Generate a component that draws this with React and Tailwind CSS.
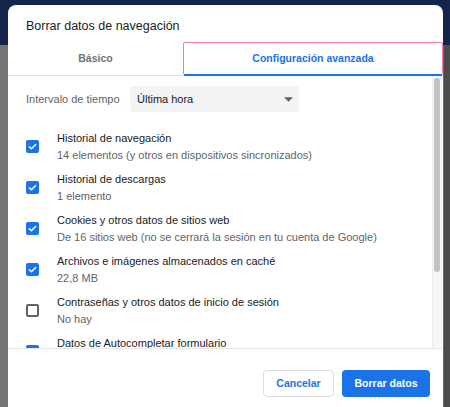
import React from "react";

const items = [
  { title: "Historial de navegación", sub: "14 elementos (y otros en dispositivos sincronizados)", checked: true },
  { title: "Historial de descargas", sub: "1 elemento", checked: true },
  { title: "Cookies y otros datos de sitios web", sub: "De 16 sitios web (no se cerrará la sesión en tu cuenta de Google)", checked: true },
  { title: "Archivos e imágenes almacenados en caché", sub: "22,8 MB", checked: true },
  { title: "Contraseñas y otros datos de inicio de sesión", sub: "No hay", checked: false },
  { title: "Datos de Autocompletar formulario", sub: "", checked: true },
];

function Checkbox({ checked }) {
  if (!checked) {
    return <div className="w-[13px] h-[13px] shrink-0 rounded-[2px] border-2 border-[#5f6368] bg-white" />;
  }
  return (
    <div className="w-[13px] h-[13px] shrink-0 rounded-[2px] bg-[#1a73e8] flex items-center justify-center">
      <svg width="11" height="11" viewBox="0 0 24 24">
        <path d="M5 12.5l4.5 4.5L19 7.5" fill="none" stroke="#fff" strokeWidth="3.2" strokeLinecap="round" strokeLinejoin="round" />
      </svg>
    </div>
  );
}

export default function App() {
  return (
    <div
      className="relative w-[450px] h-[407px] overflow-hidden"
      style={{ fontFamily: '"Liberation Sans", Arial, sans-serif' }}
    >
      {/* dimmed page behind the modal */}
      <div className="flex flex-col h-full">
        <div className="h-[45px] bg-[#13254a]" />
        <div className="flex-1 flex">
          <div className="flex-1 bg-[#767676] text-[#2a2a2a] text-[12px] pt-[180px] pl-[0px] leading-[40px]">
          </div>
          <div className="w-[7px] bg-[#4c4c4c] border-l border-[#6a6a6a]" />
        </div>
      </div>

      {/* dialog */}
      <div className="absolute left-[8px] top-[5px] w-[435px] h-[420px] bg-white rounded-t-[8px] flex flex-col">
        <div className="h-[37px] pl-[18px] pt-[13px] text-[12.5px] leading-[16px] text-[#202124]">
          Borrar datos de navegación
        </div>

        {/* tabs */}
        <div className="flex h-[34px] border-b border-[#e0e0e0]">
          <div className="w-[175px] flex items-center justify-center text-[10.5px] font-bold text-[#6f7378]">
            Básico
          </div>
          <div className="flex-1 relative flex items-center justify-center text-[10.5px] font-bold text-[#1a73e8] border-[1.5px] border-[#f07aa8] rounded-[2px]">
            Configuración avanzada
            <div className="absolute left-0 right-0 bottom-[-1.5px] h-[2px] bg-[#1a73e8]" />
          </div>
        </div>

        {/* scrollable content */}
        <div className="h-[273px] flex border-b border-[#e6e6e6] overflow-hidden">
          <div className="flex-1 pl-[18px] pt-[10px]">
            <div className="flex items-center h-[26px]">
              <div className="w-[104px] text-[11px] text-[#5f6368]">Intervalo de tiempo</div>
              <div className="w-[169px] h-[26px] bg-[#f1f3f4] rounded-[3px] flex items-center justify-between pl-[7px] pr-[6px]">
                <span className="text-[11px] text-[#202124]">Última hora</span>
                <svg width="9" height="5" viewBox="0 0 10 5">
                  <path d="M0 0h10L5 5z" fill="#5f6368" />
                </svg>
              </div>
            </div>
            <div className="mt-[14px] flex flex-col">
              {items.map((it) => (
                <div key={it.title} className="flex items-center h-[41px] shrink-0">
                  <Checkbox checked={it.checked} />
                  <div className="ml-[18px] flex flex-col">
                    <div className="text-[11px] leading-[17px] text-[#202124]">{it.title}</div>
                    <div className="text-[11px] leading-[17px] text-[#5f6368] h-[17px]">{it.sub}</div>
                  </div>
                </div>
              ))}
            </div>
          </div>
          {/* scrollbar */}
          <div className="w-[10px] bg-[#f7f7f7] border-l border-[#ececec] pt-[2px] mr-[1px]">
            <div className="ml-[1px] w-[6px] h-[194px] rounded-[3px] bg-[#c2c2c2]" />
          </div>
        </div>

        {/* footer */}
        <div className="flex justify-end gap-[8px] pt-[21px] pr-[13px]">
          <div className="w-[71px] h-[27px] rounded-[4px] border border-[#dadce0] bg-white flex items-center justify-center text-[10.5px] font-bold text-[#1a73e8]">
            Cancelar
          </div>
          <div className="w-[88px] h-[27px] rounded-[4px] bg-[#1a73e8] flex items-center justify-center text-[10.5px] font-bold text-white">
            Borrar datos
          </div>
        </div>
      </div>
    </div>
  );
}
